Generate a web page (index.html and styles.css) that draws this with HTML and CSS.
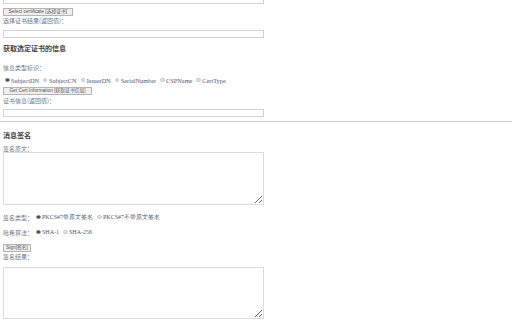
FILE: index.html
```html
<!DOCTYPE html>
<html lang="zh">
<head>
<meta charset="utf-8">
<title>证书操作</title>
<link rel="stylesheet" href="styles.css">
</head>
<body>
<div class="section first">
  <input class="field field-top" type="text">
  <button class="btn btn-select">Select certificate [选择证书]</button>
  <p class="label label-a">选择证书结果(返回值)：</p>
  <input class="field field-b" type="text">
  <h3 class="title title-a">获取选定证书的信息</h3>
  <p class="label label-c">信息类型标识：</p>
  <div class="radios radios-info">
    <label class="opt"><input type="radio" name="t" checked><span>SubjectDN</span></label>
    <label class="opt"><input type="radio" name="t"><span>SubjectCN</span></label>
    <label class="opt"><input type="radio" name="t"><span>IssuerDN</span></label>
    <label class="opt"><input type="radio" name="t"><span>SerialNumber</span></label>
    <label class="opt"><input type="radio" name="t"><span>CSPName</span></label>
    <label class="opt"><input type="radio" name="t"><span>CertType</span></label>
  </div>
  <button class="btn btn-info">Get Cert Information [获取证书信息]</button>
  <p class="label label-d">证书信息(返回值)：</p>
  <input class="field field-d" type="text">
</div>
<hr class="divider">
<div class="section">
  <h3 class="title title-b">消息签名</h3>
  <p class="label label-e">签名原文：</p>
  <textarea class="area area-src"></textarea>
  <div class="radios row row-type">
    <span class="row-label">签名类型：</span>
    <label class="opt"><input type="radio" name="s" checked><span>PKCS#7带原文签名</span></label>
    <label class="opt"><input type="radio" name="s"><span>PKCS#7不带原文签名</span></label>
  </div>
  <div class="radios row row-hash">
    <span class="row-label">哈希算法：</span>
    <label class="opt"><input type="radio" name="h" checked><span>SHA-1</span></label>
    <label class="opt"><input type="radio" name="h"><span>SHA-256</span></label>
  </div>
  <button class="btn btn-sign">Sign[签名]</button>
  <p class="label label-f">签名结果：</p>
  <textarea class="area area-res"></textarea>
</div>
</body>
</html>
```
FILE: styles.css
```css
html, body {
  margin: 0;
  padding: 0;
  background: #ffffff;
  overflow: hidden;
}
body {
  font-family: "Noto Sans CJK SC", "Liberation Sans", sans-serif;
  font-size: 6px;
  color: #777777;
}
.section {
  display: flex;
  flex-direction: column;
  align-items: flex-start;
  padding: 0 0 0 3px;
}
.first {
  margin-top: -4px;
}
.field {
  box-sizing: border-box;
  width: 261px;
  height: 8px;
  margin: 0;
  padding: 0;
  border: 1px solid #d2d2d2;
  background: #ffffff;
  outline: none;
}
.field-b { margin-top: 5px; }
.field-d { margin-top: 4px; }
.btn {
  box-sizing: border-box;
  height: 8px;
  margin: 0;
  padding: 0 2px;
  border: 1px solid #b5b5b5;
  border-radius: 0;
  background: #eeeeee;
  font-family: "Liberation Sans", "Noto Sans CJK SC", sans-serif;
  font-size: 4.8px;
  line-height: 6px;
  color: #555555;
  white-space: nowrap;
}
.btn-select { margin-top: 4px; width: 70px; }
.btn-info { margin-top: 3px; width: 89px; }
.btn-sign { margin-top: 8px; width: 28px; }
.label {
  margin: 0;
  line-height: 8px;
  white-space: nowrap;
}
.label-a { margin-top: 1px; }
.label-c { margin-top: 11px; }
.label-d { margin-top: 2px; }
.label-e { margin-top: 6px; line-height: 6px; }
.label-f { margin-top: 2px; line-height: 6px; }
.title {
  margin: 0;
  font-size: 7px;
  line-height: 10px;
  font-weight: bold;
  color: #444444;
}
.title-a { margin-top: 5px; }
.title-b { margin-top: 8px; }
.radios {
  display: flex;
  align-items: center;
  height: 8px;
  white-space: nowrap;
}
.radios-info { margin-top: 4px; }
.opt {
  display: flex;
  align-items: center;
  margin-right: 2px;
  font-family: "Liberation Serif", serif;
  font-size: 6.3px;
  color: #4a5a75;
}
.opt input {
  -webkit-appearance: none;
  appearance: none;
  box-sizing: border-box;
  width: 4.5px;
  height: 4.5px;
  margin: 0 1.5px 0 2px;
  border: 1px solid #c8c8c8;
  border-radius: 50%;
  background: #e4e4e4;
}
.opt input:checked {
  background: #444444;
  border-color: #999999;
}
.row-label {
  width: 31px;
  color: #777777;
}
.row .opt {
  font-size: 6px;
}
.row-type { margin-top: 8px; }
.row-hash { margin-top: 7px; }
.divider {
  margin: 4px 0 0 0;
  border: 0;
  border-top: 1px solid #d0d0d0;
  height: 0;
}
.area {
  box-sizing: border-box;
  width: 261px;
  margin: 0;
  padding: 0;
  border: 1px solid #dcdcdc;
  background: #ffffff;
  resize: both;
  outline: none;
}
.area-src { height: 53px; }
.area-res { height: 52px; margin-top: 7px; }
```
